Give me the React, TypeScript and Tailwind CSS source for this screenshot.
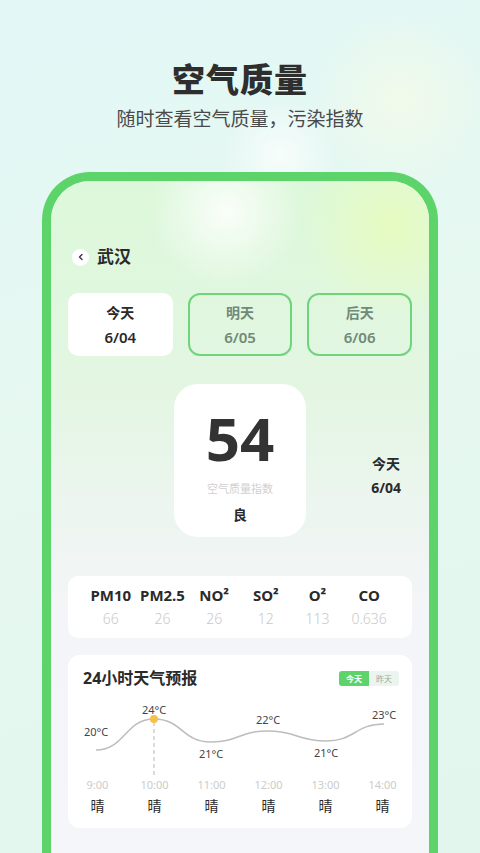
import React from "react";

const pollutants = [
  { name: "PM10", value: "66" },
  { name: "PM2.5", value: "26" },
  { name: "NO²", value: "26" },
  { name: "SO²", value: "12" },
  { name: "O²", value: "113" },
  { name: "CO", value: "0.636" },
];

const days = [
  { label: "今天", date: "6/04", active: true },
  { label: "明天", date: "6/05", active: false },
  { label: "后天", date: "6/06", active: false },
];

const hours = ["9:00", "10:00", "11:00", "12:00", "13:00", "14:00"];

const temps = [
  { x: 28, y: 36, t: "20°C" },
  { x: 86, y: 14, t: "24°C" },
  { x: 143, y: 58, t: "21°C" },
  { x: 200, y: 24, t: "22°C" },
  { x: 258, y: 57, t: "21°C" },
  { x: 316, y: 19, t: "23°C" },
];

function Chart() {
  return (
    <svg width="343" height="76" viewBox="0 0 343 76" className="block">
      <path
        d="M28,50 C57,50 57,19 86,19 C114,19 114,42 143,42 C171,42 171,31 200,31 C229,31 229,41 258,41 C287,41 287,24 316,24"
        fill="none"
        stroke="#bdbdbd"
        strokeWidth="1.5"
      />
      <line x1="86" y1="22" x2="86" y2="76" stroke="#cfcfcf" strokeWidth="1.5" strokeDasharray="4 3" />
      <circle cx="86" cy="19" r="4" fill="#f5c04a" />
      {temps.map((p, i) => (
        <text
          key={i}
          x={p.x}
          y={p.y}
          textAnchor="middle"
          fontSize="11"
          fill="#444"
          fontFamily="'Noto Sans', 'Noto Sans CJK SC', sans-serif"
        >
          {p.t}
        </text>
      ))}
    </svg>
  );
}

export default function App() {
  return (
    <div
      className="relative w-[480px] h-[853px] overflow-hidden bg-[linear-gradient(160deg,#e2f7f6_0%,#e6f8f0_45%,#e2f6ee_100%)]"
      style={{ fontFamily: "'Noto Sans', 'Noto Sans CJK SC', sans-serif" }}
    >
      <div className="absolute left-[215px] top-[105px] w-[130px] h-[100px] rounded-full bg-[radial-gradient(circle,rgba(255,255,255,0.7)_0%,rgba(255,255,255,0)_70%)]" />
      <div className="absolute left-[300px] top-[20px] w-[200px] h-[160px] rounded-full bg-[radial-gradient(circle,rgba(246,252,230,0.7)_0%,rgba(246,252,230,0)_70%)]" />

      <div className="relative flex flex-col items-center pt-[58px]">
        <h1 className="text-[33px] leading-[44px] font-black text-[#2e2e2e] tracking-[1px]">空气质量</h1>
        <p className="mt-[3px] text-[19px] leading-[28px] text-[#4a4a4a]">随时查看空气质量，污染指数</p>
      </div>

      <div className="relative mt-[39px] ml-[42px] w-[396px] h-[700px] border-[9px] border-b-0 border-[#5dd46a] rounded-t-[48px] overflow-hidden">
        <div className="h-full bg-[linear-gradient(180deg,#dcf8da_0%,#e3f6e2_30%,#eef5f1_50%,#f4f5f8_62%,#f5f6f8_100%)] relative">
          <div className="absolute left-[90px] top-[-40px] w-[170px] h-[140px] rounded-full bg-[radial-gradient(circle,rgba(255,255,255,0.85)_0%,rgba(255,255,255,0)_70%)]" />
          <div className="absolute left-[240px] top-[-40px] w-[200px] h-[170px] rounded-full bg-[radial-gradient(circle,rgba(232,252,190,0.9)_0%,rgba(232,252,190,0)_70%)]" />

          <div className="relative px-[17px] pt-[66px]">
            <div className="flex items-center gap-[8px] pl-[4px]">
              <div className="w-[17px] h-[17px] rounded-full bg-white flex items-center justify-center">
                <svg width="8" height="8" viewBox="0 0 8 8">
                  <path d="M5,1.5 L2.5,4 L5,6.5" fill="none" stroke="#333" strokeWidth="1.3" strokeLinecap="round" strokeLinejoin="round" />
                </svg>
              </div>
              <span className="text-[17px] leading-[20px] font-bold text-[#2a2a2a]">武汉</span>
            </div>

            <div className="grid grid-cols-3 gap-[15px] mt-[26px]">
              {days.map((d) => (
                <div
                  key={d.label}
                  className={
                    d.active
                      ? "h-[63px] rounded-[10px] bg-white flex flex-col items-center justify-center"
                      : "h-[63px] rounded-[12px] border-2 border-[#6fd47b] flex flex-col items-center justify-center"
                  }
                >
                  <span className={d.active ? "text-[14px] leading-[20px] font-bold text-[#2a2a2a]" : "text-[14px] leading-[20px] font-bold text-[#6f8a78]"}>
                    {d.label}
                  </span>
                  <span className={d.active ? "mt-[4px] text-[15px] leading-[20px] font-semibold text-[#2a2a2a]" : "mt-[4px] text-[15px] leading-[20px] font-semibold text-[#6f8a78]"}>
                    {d.date}
                  </span>
                </div>
              ))}
            </div>

            <div className="grid grid-cols-[1fr_132px_1fr] mt-[28px]">
              <div />
              <div className="h-[153px] rounded-[24px] bg-white flex flex-col items-center pt-[22px]">
                <span className="text-[60px] leading-[64px] font-bold text-[#333]">54</span>
                <span className="mt-[12px] text-[11px] leading-[14px] text-[#d0d0d0]">空气质量指数</span>
                <span className="mt-[10px] text-[14px] leading-[18px] font-bold text-[#2a2a2a]">良</span>
              </div>
              <div className="flex flex-col items-end justify-center pr-[11px] pt-[30px]">
                <div className="flex flex-col items-center">
                  <span className="text-[14px] leading-[20px] font-bold text-[#2a2a2a]">今天</span>
                  <span className="mt-[4px] text-[14px] leading-[20px] font-bold text-[#2a2a2a]">6/04</span>
                </div>
              </div>
            </div>

            <div className="mt-[39px] h-[62px] rounded-[10px] bg-white grid grid-cols-6 px-[17px] pt-[9px]">
              {pollutants.map((p) => (
                <div key={p.name} className="flex flex-col items-center">
                  <span className="text-[15px] leading-[20px] font-bold text-[#2a2a2a]">{p.name}</span>
                  <span className="mt-[4px] text-[14px] leading-[20px] font-light text-[#c9c9c9]">{p.value}</span>
                </div>
              ))}
            </div>

            <div className="mt-[17px] h-[173px] rounded-[12px] bg-white">
              <div className="flex items-center justify-between pl-[15px] pr-[13px] pt-[12px]">
                <span className="text-[16px] leading-[22px] font-bold text-[#2a2a2a]">24小时天气预报</span>
                <div className="flex text-[8px] leading-[15px]">
                  <span className="px-[7px] rounded-l-[3px] bg-[#5fd36b] text-white font-bold">今天</span>
                  <span className="px-[7px] rounded-r-[3px] bg-[#ebf4ef] text-[#9aa89f]">昨天</span>
                </div>
              </div>
              <div className="mt-[11px]">
                <Chart />
              </div>
              <div className="grid grid-cols-6 px-[1px]">
                {hours.map((h) => (
                  <div key={h} className="flex flex-col items-center">
                    <span className="text-[11px] leading-[18px] text-[#cccccc]">{h}</span>
                    <span className="mt-[2px] text-[14px] leading-[20px] text-[#2a2a2a]">晴</span>
                  </div>
                ))}
              </div>
            </div>
          </div>
        </div>
      </div>
    </div>
  );
}
